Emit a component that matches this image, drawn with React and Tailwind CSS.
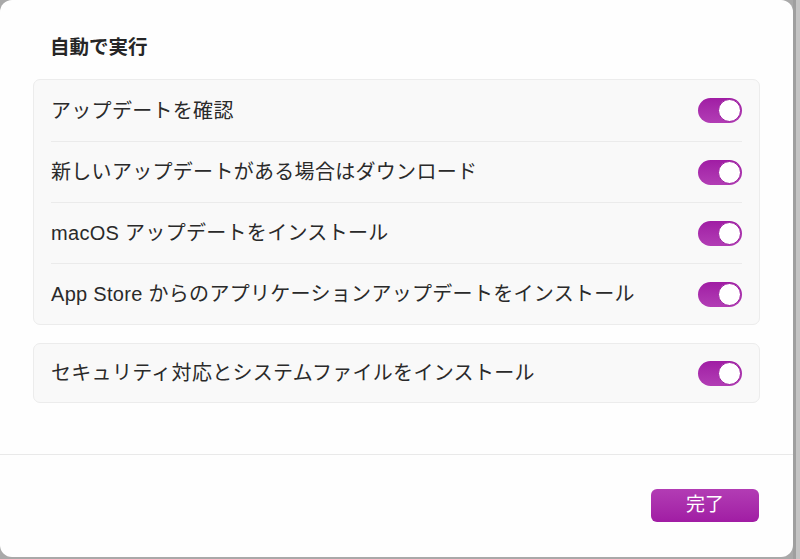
import React from "react";

const font = { fontFamily: '"Liberation Sans", "Noto Sans CJK JP", sans-serif' };

function Toggle() {
  return (
    <div className="flex h-[25px] w-[44px] shrink-0 items-center justify-end rounded-full bg-gradient-to-b from-[#a01ca4] to-[#b23db5] px-[1px]">
      <div className="h-[23px] w-[23px] rounded-full border border-[#9c1ea0] bg-white" />
    </div>
  );
}

function Row({ label, first, tall = true }) {
  return (
    <div className="px-[17px]">
      <div
        className={`flex ${tall ? "h-[61px]" : "h-[58px]"} items-center justify-between ${
          first ? "" : "border-t border-[#ebebeb]"
        }`}
      >
        <span className="text-[20px] tracking-[0.3px] text-[#2a2a2a]">{label}</span>
        <Toggle />
      </div>
    </div>
  );
}

const main = [
  "アップデートを確認",
  "新しいアップデートがある場合はダウンロード",
  "macOS アップデートをインストール",
  "App Store からのアプリケーションアップデートをインストール",
];

export default function App() {
  return (
    <div className="flex h-[559px] w-[800px] bg-[#a9a9a9]" style={font}>
      <div className="flex h-[557px] w-[793px] flex-col rounded-[12px] bg-[#fefefe]">
        <div className="flex flex-col px-[33px] pt-[35px]">
          <h2 className="pl-[17px] text-[19.5px] font-semibold leading-[24px] text-[#262626]">
            自動で実行
          </h2>
          <div className="mt-[20px] rounded-[7px] border border-[#ececec] bg-[#f9f9f9]">
            {main.map((t, i) => (
              <Row key={t} label={t} first={i === 0} />
            ))}
          </div>
          <div className="mt-[18px] rounded-[7px] border border-[#ececec] bg-[#f9f9f9]">
            <Row label="セキュリティ対応とシステムファイルをインストール" first tall={false} />
          </div>
        </div>
        <div className="mt-[51px] border-t border-[#e9e9e9]" />
        <div className="flex justify-end px-[34px] pt-[34px]">
          <button className="flex h-[33px] w-[108px] items-center justify-center rounded-[6px] bg-gradient-to-b from-[#b23cb4] to-[#a11ca4] text-[19px] text-white">
            完了
          </button>
        </div>
      </div>
      <div className="flex h-full flex-1">
        <div className="w-[3px] bg-[#9f9f9f]" />
        <div className="flex-1 bg-[#c4c4c4]" />
      </div>
    </div>
  );
}
